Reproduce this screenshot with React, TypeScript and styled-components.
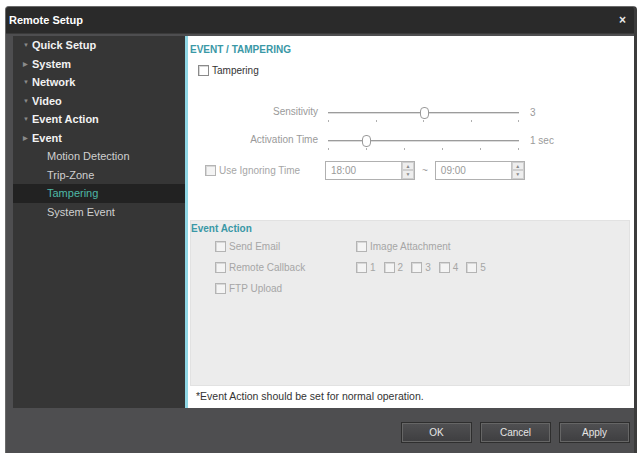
import React from 'react';
import styled, { createGlobalStyle } from 'styled-components';

const GlobalStyle = createGlobalStyle`
body{
  margin:0;
  background:#ffffff;
  font-family:"Liberation Sans", Arial, sans-serif;
}
`;

const Page = styled.div`
width:640px;
height:453px;
padding:6px 3px 0 5px;
box-sizing:border-box;
`;
const Dialog = styled.div`
height:447px;
background-color:#4e4e50;
border:1px solid #6a6a6a;
border-bottom:none;
border-right:3px solid #3c3c3c;
border-radius:4px 4px 0 0;
display:flex;
flex-direction:column;
box-sizing:border-box;
overflow:hidden;
`;
const TitleBar = styled.div`
height:26px;
background-color:#2a2a2a;
border-bottom:1px solid #3a3a3a;
display:flex;
align-items:center;
justify-content:space-between;
padding:0 8px 0 3px;
color:#ffffff;
font-size:11px;
font-weight:bold;
`;
const CloseButton = styled.span`
font-size:12px;
font-weight:bold;
color:#e8e8e8;
`;
const Body = styled.div`
display:flex;
padding:2px 0 0 7px;
height:372px;
`;
const Sidebar = styled.div`
width:172px;
background-color:#363636;
padding-top:0;
box-sizing:border-box;
`;
const TreeRow = styled.div<{ $child?: boolean; $selected?: boolean }>`
height:18.5px;
display:flex;
align-items:center;
padding-left:${p => (p.$child ? '34px' : '10px')};
background-color:${p => (p.$selected ? '#222222' : 'transparent')};
color:${p => (p.$selected ? '#4fb8a6' : p.$child ? '#d0d0d0' : '#f2f2f2')};
font-size:11px;
font-weight:${p => (p.$child ? 'normal' : 'bold')};
`;
const Arrow = styled.span`
width:9px;
font-size:6px;
color:#8a8a8a;
`;
const Content = styled.div`
flex:1;
background-color:#ffffff;
border-left:3px solid #8fd6e4;
display:flex;
flex-direction:column;
padding:7px 4px 0 2px;
`;
const SectionTitle = styled.div`
color:#3a98a6;
font-size:10px;
font-weight:bold;
height:14px;
line-height:14px;
`;
const CheckRow = styled.label<{ $disabled?: boolean }>`
display:flex;
align-items:center;
gap:3px;
font-size:10px;
color:${p => (p.$disabled ? '#a6a6a6' : '#333333')};
`;
const Box = styled.span<{ $disabled?: boolean }>`
width:9px;
height:9px;
border:1px solid ${p => (p.$disabled ? '#b4b4b4' : '#8a8a8a')};
background:${p => (p.$disabled ? '#f4f4f4' : '#ffffff')};
box-shadow:inset 1px 1px 0 #d8d8d8;
flex:none;
`;
const TamperRow = styled.div`
margin:5px 0 0 8px;
height:16px;
display:flex;
align-items:center;
`;
const Spacer = styled.div`
height:29px;
`;
const SliderRow = styled.div`
display:flex;
align-items:flex-start;
height:28px;
`;
const SliderLabel = styled.div`
width:128px;
text-align:right;
font-size:10px;
color:#9a9a9a;
padding-right:10px;
line-height:12px;
margin-top:-1px;
`;
const SliderBox = styled.div`
position:relative;
width:191px;
padding-top:5px;
`;
const Track = styled.div`
height:1px;
background:#9c9c9c;
border-bottom:1px solid #dcdcdc;
`;
const Thumb = styled.div`
position:absolute;
top:0;
width:7px;
height:10px;
border:1px solid #9a9a9a;
border-radius:4px;
background:#ffffff;
margin-left:-4px;
`;
const Ticks = styled.div`
display:flex;
justify-content:space-between;
margin-top:6px;
`;
const Tick = styled.span`
width:1px;
height:2px;
background:#b0b0b0;
`;
const SliderValue = styled.div`
font-size:10px;
color:#9a9a9a;
padding-left:11px;
line-height:12px;
`;
const TimeRow = styled.div`
display:flex;
align-items:center;
gap:4px;
margin:-4px 0 0 15px;
height:22px;
`;
const TimeCheck = styled(CheckRow)`
width:116px;
`;
const TimeInput = styled.div`
width:90px;
height:19px;
border:1px solid #b0b0b0;
display:flex;
justify-content:space-between;
align-items:center;
font-size:10px;
color:#9a9a9a;
padding-left:5px;
box-sizing:border-box;
background:#ffffff;
`;
const Spinner = styled.div`
width:12px;
height:17px;
display:flex;
flex-direction:column;
border-left:1px solid #c4c4c4;
`;
const SpinPart = styled.div`
flex:1;
background:#eeeeee;
border:1px solid #cfcfcf;
font-size:5px;
color:#8a8a8a;
display:flex;
align-items:center;
justify-content:center;
`;
const Tilde = styled.span`
font-size:10px;
color:#9a9a9a;
padding:0 3px;
`;
const ActionBox = styled.div`
margin-top:39px;
height:166px;
background:#ececec;
border:1px solid #e2e2e2;
padding:1px 0 0 0;
box-sizing:border-box;
`;
const ActionGrid = styled.div`
display:grid;
grid-template-columns:141px auto;
row-gap:5px;
padding:2px 0 0 24px;
`;
const ActionCell = styled.div<{ $wide?: boolean }>`
height:16px;
display:flex;
align-items:center;
gap:${p => (p.$wide ? '8px' : '4px')};
`;
const Note = styled.div`
font-size:10.5px;
color:#333333;
padding:4px 0 0 6px;
`;
const Footer = styled.div`
display:flex;
justify-content:flex-end;
gap:8px;
padding:14px 4px 0 0;
`;
const Button = styled.button`
width:71px;
height:21px;
background:linear-gradient(#505052, #3e3e40);
border:1px solid #2e2e2e;
box-shadow:inset 0 0 0 1px #666666;
color:#e6e6e6;
font-family:"Liberation Sans", Arial, sans-serif;
font-size:10px;
cursor:pointer;
`;

const tree = [
  { label: 'Quick Setup', arrow: '▼' },
  { label: 'System', arrow: '▶' },
  { label: 'Network', arrow: '▼' },
  { label: 'Video', arrow: '▼' },
  { label: 'Event Action', arrow: '▼' },
  { label: 'Event', arrow: '▶' },
];
const children = ['Motion Detection', 'Trip-Zone', 'Tampering', 'System Event'];

const Slider = ({ label, ticks, pos, value }: { label: string; ticks: number; pos: number; value: string }) => (
  <SliderRow>
    <SliderLabel>{label}</SliderLabel>
    <SliderBox>
      <Track />
      <Thumb style={{ left: `${pos * 100}%` }} />
      <Ticks>
        {Array.from({ length: ticks }).map((_, i) => <Tick key={i} />)}
      </Ticks>
    </SliderBox>
    <SliderValue>{value}</SliderValue>
  </SliderRow>
);

const Time = ({ value }: { value: string }) => (
  <TimeInput>
    {value}
    <Spinner>
      <SpinPart>▲</SpinPart>
      <SpinPart>▼</SpinPart>
    </Spinner>
  </TimeInput>
);

const App = () => {
  return <Page>
    <GlobalStyle />
    <Dialog>
      <TitleBar><span>Remote Setup</span><CloseButton>×</CloseButton></TitleBar>
      <Body>
        <Sidebar>
          {tree.map(t => <TreeRow key={t.label}><Arrow>{t.arrow}</Arrow>{t.label}</TreeRow>)}
          {children.map(c => <TreeRow key={c} $child $selected={c === 'Tampering'}>{c}</TreeRow>)}
        </Sidebar>
        <Content>
          <SectionTitle>EVENT / TAMPERING</SectionTitle>
          <TamperRow><CheckRow><Box />Tampering</CheckRow></TamperRow>
          <Spacer />
          <Slider label="Sensitivity" ticks={5} pos={0.5} value="3" />
          <Slider label="Activation Time" ticks={6} pos={0.2} value="1 sec" />
          <TimeRow>
            <TimeCheck $disabled><Box $disabled />Use Ignoring Time</TimeCheck>
            <Time value="18:00" />
            <Tilde>~</Tilde>
            <Time value="09:00" />
          </TimeRow>
          <ActionBox>
            <SectionTitle>Event Action</SectionTitle>
            <ActionGrid>
              <ActionCell><CheckRow $disabled><Box $disabled />Send Email</CheckRow></ActionCell>
              <ActionCell><CheckRow $disabled><Box $disabled />Image Attachment</CheckRow></ActionCell>
              <ActionCell><CheckRow $disabled><Box $disabled />Remote Callback</CheckRow></ActionCell>
              <ActionCell $wide>
                {['1', '2', '3', '4', '5'].map(n => <CheckRow key={n} $disabled><Box $disabled />{n}</CheckRow>)}
              </ActionCell>
              <ActionCell><CheckRow $disabled><Box $disabled />FTP Upload</CheckRow></ActionCell>
            </ActionGrid>
          </ActionBox>
          <Note>*Event Action should be set for normal operation.</Note>
        </Content>
      </Body>
      <Footer>
        <Button>OK</Button>
        <Button>Cancel</Button>
        <Button>Apply</Button>
      </Footer>
    </Dialog>
  </Page>
}

export default App;
